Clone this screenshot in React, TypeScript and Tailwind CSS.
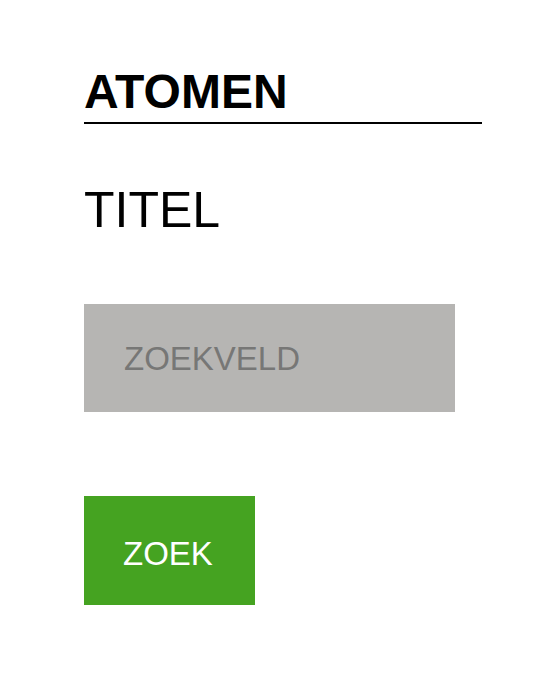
import React from 'react';

const App: React.FC = () => {
  return (
    <div className="min-h-screen bg-white pl-[84px] pt-[68px]" style={{ fontFamily: '"Liberation Sans", Arial, sans-serif' }}>
      <div className="w-[398px]">
        <h1 className="text-[48px] font-bold leading-none text-black pb-[6px] border-b-2 border-black">ATOMEN</h1>

        <h2 className="mt-[61px] text-[50px] leading-none text-black">TITEL</h2>

        <div className="mt-[69px] flex h-[108px] w-[371px] items-center bg-[#b6b5b3] pl-[40px]">
          <span className="text-[33px] leading-none text-[#777776]">ZOEKVELD</span>
        </div>

        <button className="mt-[84px] flex h-[109px] w-[171px] items-center bg-[#45a321] pl-[39px] pt-[5px]">
          <span className="text-[33px] leading-none text-white">ZOEK</span>
        </button>
      </div>
    </div>
  );
};

export default App;
